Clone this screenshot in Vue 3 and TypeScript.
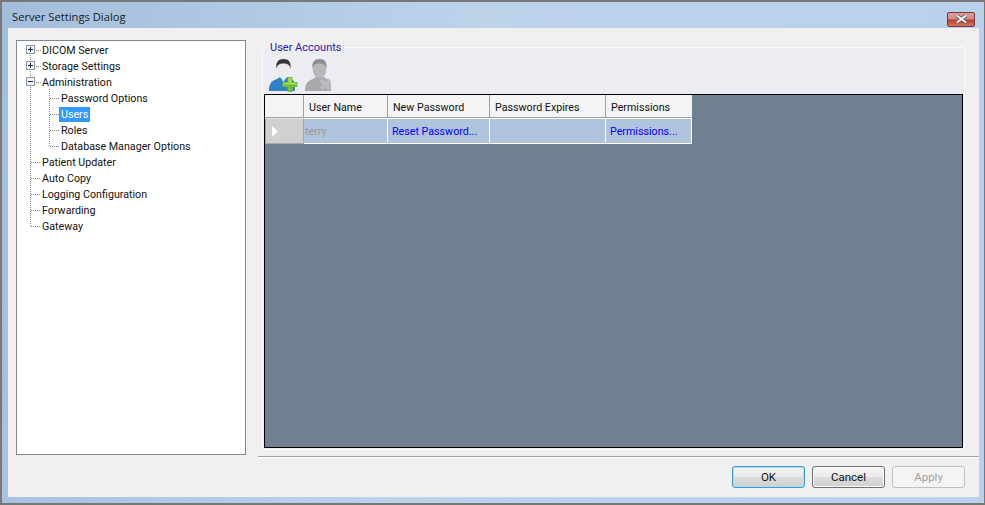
<script setup lang="ts">
interface TreeRow {
  label: string;
  level: number;
  toggle?: "plus" | "minus";
  selected?: boolean;
}

const rows: TreeRow[] = [
  { label: "DICOM Server", level: 0, toggle: "plus" },
  { label: "Storage Settings", level: 0, toggle: "plus" },
  { label: "Administration", level: 0, toggle: "minus" },
  { label: "Password Options", level: 1 },
  { label: "Users", level: 1, selected: true },
  { label: "Roles", level: 1 },
  { label: "Database Manager Options", level: 1 },
  { label: "Patient Updater", level: 0 },
  { label: "Auto Copy", level: 0 },
  { label: "Logging Configuration", level: 0 },
  { label: "Forwarding", level: 0 },
  { label: "Gateway", level: 0 },
];

const columns = ["User Name", "New Password", "Password Expires", "Permissions"];
</script>

<template>
  <div class="window">
    <div class="frame">
      <header class="titlebar">
        <span class="title">Server Settings Dialog</span>
        <button class="close" aria-label="Close">
          <svg width="13" height="10" viewBox="0 0 13 10">
            <path d="M2 1.5 L11 8.5 M11 1.5 L2 8.5" stroke="#5c5c64" stroke-width="3.6" fill="none" />
            <path d="M2 1.5 L11 8.5 M11 1.5 L2 8.5" stroke="#f4f4f6" stroke-width="2.2" fill="none" />
          </svg>
        </button>
      </header>

      <div class="client">
        <div class="main">
          <nav class="tree">
            <svg class="tree-lines" width="228" height="200" viewBox="0 0 228 200">
              <g stroke="#8a8a8a" stroke-dasharray="1 1" fill="none" shape-rendering="crispEdges">
                <path d="M13.5 4 V185.5" />
                <path d="M32.5 48 V105.5" />
                <path d="M19 9.5 H24 M19 25.5 H24 M19 41.5 H24" />
                <path d="M14 121.5 H24 M14 137.5 H24 M14 153.5 H24 M14 169.5 H24 M14 185.5 H24" />
                <path d="M33 57.5 H43 M33 73.5 H43 M33 89.5 H43 M33 105.5 H43" />
              </g>
            </svg>
            <div
              v-for="row in rows"
              :key="row.label"
              class="tree-row"
              :class="{ nested: row.level === 1 }"
            >
              <span v-if="row.toggle" class="toggle">
                <svg width="9" height="9" viewBox="0 0 9 9">
                  <rect x="0.5" y="0.5" width="8" height="8" fill="#f4f5f8" stroke="#8e99a8" />
                  <path d="M2 4.5 H7" stroke="#1c2c50" shape-rendering="crispEdges" />
                  <path v-if="row.toggle === 'plus'" d="M4.5 2 V7" stroke="#1c2c50" shape-rendering="crispEdges" />
                </svg>
              </span>
              <span class="tree-label" :class="{ selected: row.selected }">{{ row.label }}</span>
            </div>
          </nav>

          <fieldset class="group">
            <legend>User Accounts</legend>
            <div class="toolbar">
              <svg class="user-icon" width="30" height="34" viewBox="0 0 30 34">
                <path d="M1 33 C1 26 3 23 9 21 L12 19 L20 19 L23 21 C26 22 27 24 27 33 Z" fill="#2f80c8" />
                <path d="M11.500 18 L15.500 24 L19.500 18 Z" fill="#dfe6ee" />
                <ellipse cx="15.500" cy="11" rx="6.800" ry="9.500" fill="#ebebee" />
                <path d="M8.600 11 C7.400 4 10.500 1 15.500 1 C20.500 1 23.600 4 22.400 11 C21.800 7 20 5.500 15.500 5.500 C11 5.500 9.200 7 8.600 11 Z" fill="#34363c" />
                <path d="M19.500 19 H24.500 V24 H29.500 V29 H24.500 V34 H19.500 V29 H14.500 V24 H19.500 Z" fill="#72c02c" />
                <path d="M20.500 20 H23.500 V25 H28.500 V26.500 H15.500 V25 H20.500 Z" fill="#a8dc58" />
              </svg>
              <svg class="user-icon" width="30" height="34" viewBox="0 0 30 34">
                <path d="M1 33 C1 26 3 23 9 21 L12 19 L20 19 L23 21 C26 22 27 24 27 33 Z" fill="#a9a9a9" />
                <ellipse cx="15.500" cy="11" rx="6.800" ry="9.500" fill="#b8b8b8" />
                <path d="M8.600 11 C7.400 4 10.500 1 15.500 1 C20.500 1 23.600 4 22.400 11 C21.800 7 20 5.500 15.500 5.500 C11 5.500 9.200 7 8.600 11 Z" fill="#8e8e8e" />
                <path d="M17 22 L26 31 M26 22 L17 31" stroke="#bcbcbe" stroke-width="4" />
              </svg>
            </div>
            <div class="grid-view">
              <div class="table">
                <div class="head corner"></div>
                <div v-for="col in columns" :key="col" class="head">{{ col }}</div>
                <div class="row-head">
                  <svg width="6" height="11" viewBox="0 0 6 11"><path d="M0 0 L6 5.500 L0 11 Z" fill="#fff" /></svg>
                </div>
                <div class="cell muted">terry</div>
                <div class="cell link">Reset Password...</div>
                <div class="cell"></div>
                <div class="cell link">Permissions...</div>
              </div>
            </div>
          </fieldset>
        </div>

        <footer class="footer">
          <button class="btn default">OK</button>
          <button class="btn">Cancel</button>
          <button class="btn disabled">Apply</button>
        </footer>
      </div>
    </div>
  </div>
</template>

<style>
html,
body {
  margin: 0;
  background: #787878;
}
</style>

<style scoped>
.window {
  width: 985px;
  height: 505px;
  box-sizing: border-box;
  padding: 2px 1px 2px 2px;
  background: #787878;
  font-family: Roboto, "Liberation Sans", sans-serif;
  font-size: 10.7px;
  color: #111;
}
.frame {
  height: 100%;
  box-sizing: border-box;
  padding: 0 5px 6px 6px;
  display: flex;
  flex-direction: column;
  background: linear-gradient(100deg, #a3bedc 0%, #bcd3ea 45%, #b9d1ea 100%);
}
.titlebar {
  height: 26px;
  flex: none;
  display: flex;
  align-items: center;
  justify-content: space-between;
}
.title {
  margin-left: 4px;
  margin-top: 2px;
  font-family: "Open Sans", "Noto Sans", sans-serif;
  font-size: 11.2px;
  color: #1a1a1a;
}
.close {
  width: 28px;
  height: 15px;
  margin-right: 4px;
  margin-top: 8px;
  padding: 0;
  display: flex;
  align-items: center;
  justify-content: center;
  border: 1px solid #7a3540;
  border-radius: 2px;
  background: linear-gradient(#dca39a 0%, #d08a80 48%, #bb3a28 52%, #d07a60 100%);
}
.client {
  flex: 1;
  display: flex;
  flex-direction: column;
  background: #f0f0f0;
  min-height: 0;
}
.main {
  height: 428px;
  flex: none;
  display: flex;
  align-items: flex-start;
  padding: 12px 12px 0 8px;
  box-sizing: border-box;
}
.tree {
  position: relative;
  width: 230px;
  height: 415px;
  flex: none;
  box-sizing: border-box;
  border: 1px solid #828790;
  background: #fff;
  padding-top: 1px;
}
.tree-lines {
  position: absolute;
  left: 0;
  top: 0;
  pointer-events: none;
}
.tree-row {
  position: relative;
  height: 16px;
  display: flex;
  align-items: center;
  padding-left: 23px;
  white-space: nowrap;
}
.tree-row.nested {
  padding-left: 42px;
}
.toggle {
  position: absolute;
  left: 9px;
  top: 3px;
  width: 9px;
  height: 9px;
  display: flex;
}
.tree-label {
  padding: 0 2px;
  line-height: 15px;
}
.tree-label.selected {
  background: #3399ff;
  color: #fff;
}
.group {
  flex: 1;
  min-width: 0;
  height: 410px;
  margin: 0 2px 0 16px;
  padding: 0 1px 1px 1px;
  box-sizing: border-box;
  border: 1px solid #fbfbfd;
  border-radius: 2px;
  background: #ecedf3;
  display: flex;
  flex-direction: column;
  position: relative;
}
.group legend {
  margin-left: 3px;
  padding: 1px 3px 0;
  color: #2a1aa8;
  font-size: 11px;
  line-height: 14px;
}
.toolbar {
  height: 39px;
  flex: none;
  display: flex;
  align-items: center;
  gap: 6px;
  padding-left: 4px;
}
.user-icon {
  flex: none;
}
.grid-view {
  flex: 1;
  min-height: 0;
  border: 1px solid #000;
  background: #708090;
}
.table {
  display: grid;
  grid-template-columns: 39px 84px 102px 116px 86px;
  grid-template-rows: 23px 26px;
  width: max-content;
}
.head {
  display: flex;
  align-items: center;
  padding: 3px 0 0 5px;
  background: #f4f4f4;
  border-right: 1px solid #a0a0a0;
  border-bottom: 1px solid #a0a0a0;
  box-sizing: border-box;
}
.head:nth-child(5) {
  border-right-color: #f4f4f4;
}
.corner {
  padding: 0;
}
.row-head {
  display: flex;
  align-items: center;
  padding-left: 6px;
  background: #d0d0d0;
  border: 1px solid #a8a8a8;
  border-top: 1px solid #e8e8e8;
  box-sizing: border-box;
}
.cell {
  display: flex;
  align-items: center;
  padding-left: 4px;
  background: #b0c4de;
  border-right: 1px solid #fff;
  border-bottom: 1px solid #fff;
  border-top: 1px solid #fff;
  box-sizing: border-box;
}
.muted {
  color: #9a9a9a;
  padding-left: 1px;
}
.link {
  color: #0000ff;
}
.footer {
  flex: 1;
  margin-left: 250px;
  display: flex;
  justify-content: flex-end;
  gap: 7px;
  padding: 9px 14px 0 0;
  border-top: 1px solid #a0a0a0;
  box-shadow: inset 0 1px 0 #fff;
  box-sizing: border-box;
}
.btn {
  width: 73px;
  height: 22px;
  padding: 0;
  font: inherit;
  font-size: 11.5px;
  color: #111;
  border: 1px solid #707070;
  border-radius: 3px;
  background: linear-gradient(#f4f4f4 0%, #ebebeb 48%, #dcdcdc 52%, #cfcfcf 100%);
  box-shadow: inset 0 0 0 1px #fafafa;
}
.btn.default {
  border-color: #3c9bcf;
  box-shadow: inset 0 0 0 1px #a8def5;
}
.btn.disabled {
  color: #a0a0a0;
  border-color: #c0c0c0;
  background: #f4f4f4;
  box-shadow: none;
}
</style>
